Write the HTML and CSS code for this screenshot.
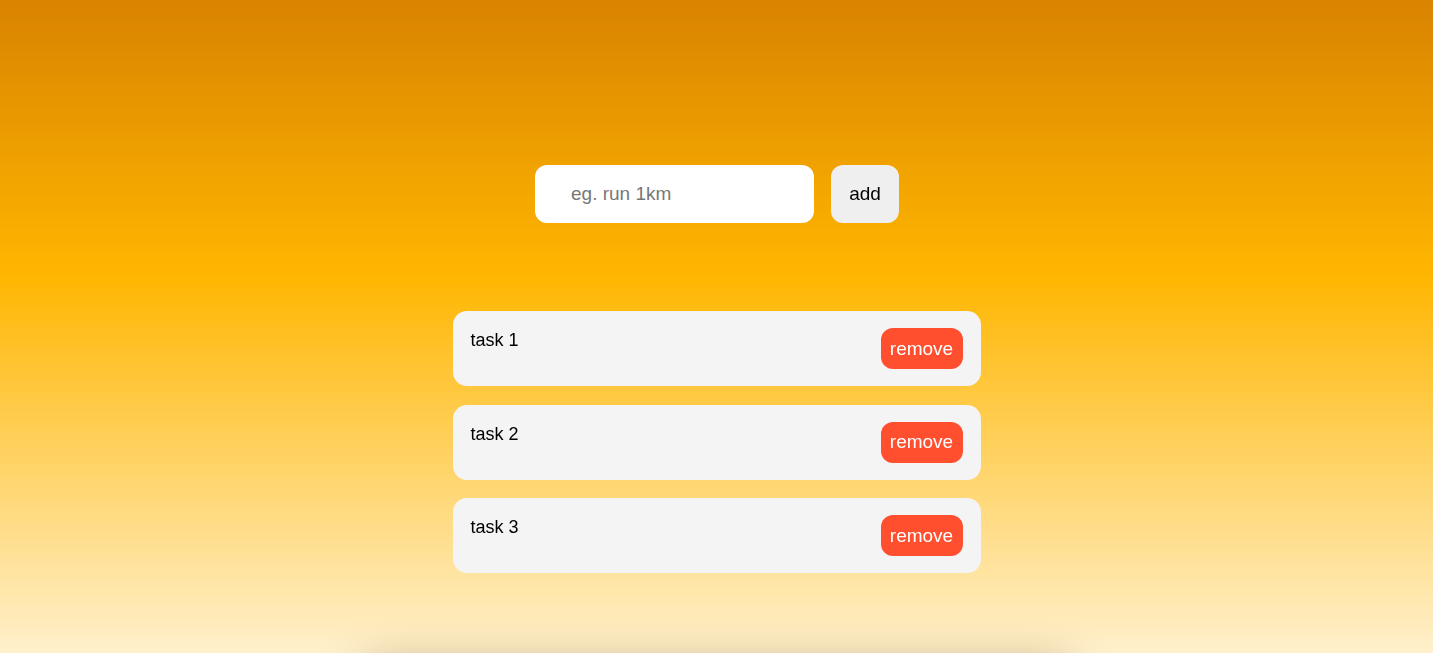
FILE: index.html
```html
<!DOCTYPE html>
<html lang="en">
<head>
<meta charset="utf-8">
<title>Todo</title>
<link rel="stylesheet" href="styles.css">
</head>
<body>
<main class="app">
  <form class="add-form">
    <input class="task-input" type="text" placeholder="eg. run 1km" autofocus>
    <button class="add-btn" type="button">add</button>
  </form>
  <ul class="task-list">
    <li class="task"><span class="task-text">task 1</span><button class="remove-btn" type="button">remove</button></li>
    <li class="task"><span class="task-text">task 2</span><button class="remove-btn" type="button">remove</button></li>
    <li class="task"><span class="task-text">task 3</span><button class="remove-btn" type="button">remove</button></li>
  </ul>
  <div class="footer-card"></div>
</main>
</body>
</html>
```
FILE: styles.css
```css
html {
  height: 100%;
  background: linear-gradient(to bottom, #d98300 0%, #ffb600 42%, #fff0cc 100%);
}
body {
  margin: 0;
  font-family: "Liberation Sans", Arial, Helvetica, sans-serif;
  color: #000;
}
.app {
  display: flex;
  flex-direction: column;
  align-items: center;
  padding-top: 165px;
}
.add-form {
  display: flex;
  gap: 17px;
  margin: 0 0 0 1px;
}
.task-input {
  width: 279px;
  height: 58px;
  box-sizing: border-box;
  border: none;
  border-radius: 12px;
  background: #fff;
  padding: 0 0 0 36px;
  font-family: inherit;
  font-size: 19px;
  color: #000;
  outline: none;
  caret-color: #000;
}
.task-input::placeholder {
  color: #777;
}
.add-btn {
  width: 68px;
  height: 58px;
  border: none;
  border-radius: 12px;
  background: #efefef;
  font-family: inherit;
  font-size: 19px;
  color: #000;
  padding: 0;
}
.task-list {
  list-style: none;
  margin: 88px 0 0 0;
  padding: 0;
  display: flex;
  flex-direction: column;
  gap: 18.5px;
  width: 528px;
}
.task {
  display: flex;
  justify-content: space-between;
  align-items: flex-start;
  height: 75px;
  box-sizing: border-box;
  padding: 17px 18px;
  background: #f4f4f4;
  border-radius: 14px;
}
.task-text {
  font-size: 18px;
  line-height: 22px;
  padding-top: 1px;
}
.remove-btn {
  height: 41px;
  width: 82px;
  border: none;
  border-radius: 12px;
  background: #ff4f2f;
  color: #fff;
  font-family: inherit;
  font-size: 19px;
  padding: 0;
}
.footer-card {
  margin-top: 92px;
  width: 710px;
  height: 200px;
  border-radius: 20px;
  box-shadow: 0 0 45px rgba(90, 60, 0, 0.4);
  background: #f2e2c0;
}
```
